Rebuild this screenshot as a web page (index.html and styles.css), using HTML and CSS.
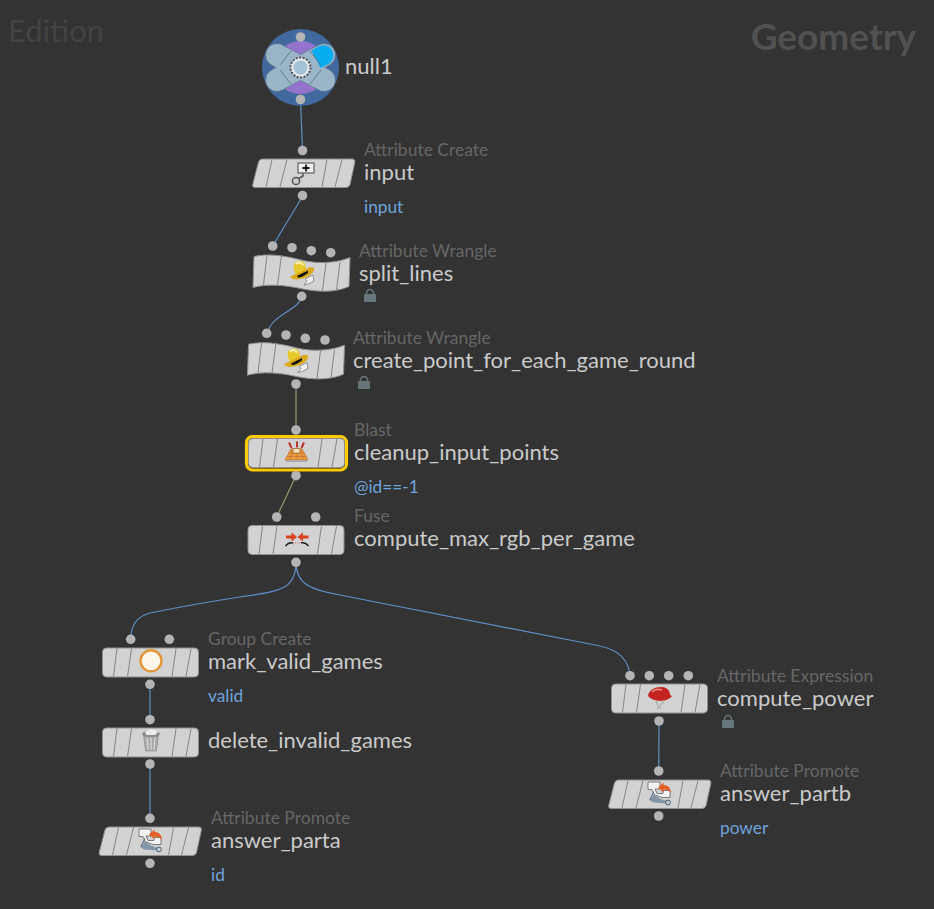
FILE: index.html
```html
<!DOCTYPE html>
<html lang="en">
<head>
  <meta charset="UTF-8">
  <title>Geometry network</title>
  <link rel="stylesheet" href="styles.css">
</head>
<body>

  <div class="graph">

    <div class="mark mark-edition">Edition</div>
    <div class="mark mark-context">Geometry</div>

    <svg class="canvas" width="934" height="909" viewBox="0 0 934 909">
      <defs>
        <!-- node bodies -->
        <g id="box">
          <rect class="body" x="0.5" y="0.5" width="96" height="29" rx="4"/>
          <path class="stripe" d="M15 1 L11.5 29 M29.5 1 L25.5 29 M74 1 L70 29 M89 1 L84 29"/>
        </g>
        <g id="para">
          <path class="body" d="M10.5 0.5 L100 0.5 Q103.5 0.5 102.8 4 L98 26 Q97 29 94 29 L3 29 Q0 29 0.7 26 L6.5 3.5 Q7.3 0.5 10.5 0.5 Z"/>
          <path class="stripe" d="M20 1 L14 28.5 M35 1 L28 28.5 M75 1 L70 28.5 M90 1 L83 28.5"/>
        </g>
        <g id="flag">
          <path class="body" d="M1 2.5 C14 -0.5 30 1 50 6.5 C66 10 84 9 97 3.5 L96 32.5 C84 38 68 38.5 50 35 C32 31 14 29.5 0 33.5 Z"/>
          <path class="stripe" d="M14 1.5 L10.5 31 M28.5 1 L24.5 31.5 M73 9 L69.5 36.5 M87 8 L83.5 36"/>
        </g>

        <!-- icons -->
        <g id="icon-wrangle">
          <path d="M4 3 C6 -1 14 -1 15 3 C16 6 16 9 15 11 L6 14 C4 10 3 6 4 3 Z" fill="#e6c92e"/>
          <path d="M6 3 C8 1 11 1 13 4" fill="none" stroke="#f7f3cf" stroke-width="2"/>
          <path d="M0 16 C4 13 9 12 12 10 C16 8 21 5 24 7 C25 11 20 15 14 17 C8 19 2 19 0 16 Z" fill="#d9a919"/>
          <path d="M7 15 C11 13 15 11 18 9.5 L18 12 C14 15 10 17 8 16.5 Z" fill="#111"/>
          <path d="M15 18 L23 14 L24 20 L18 23 L14 24 L17 20 Z" fill="#f2f2f2" stroke="#6e6e6e" stroke-width="0.7"/>
        </g>
        <g id="icon-promote">
          <path d="M1 0.5 H13 V7.5 H8 L10 12 H16 V9 H23 V16 H15 L7 13 L5 8 H1 Z" fill="#f3f3f3" stroke="#5f5f5f" stroke-width="0.8"/>
          <path d="M7 10 L3 18 L20 21" fill="none" stroke="#5a6e80" stroke-width="1.2"/>
          <path d="M3 19 L7 13 L13 17 L21 20 L20 22 L6 21 Z" fill="#8296a8"/>
          <circle cx="21" cy="21" r="2.4" fill="#c2ced7" stroke="#4c5c6a" stroke-width="1"/>
          <path d="M11 6 L16.5 1 V3.5 C21 3.5 24 6.5 24 11.5 C22.5 9 20 8 16.5 8 V11 Z" fill="#e35f27"/>
        </g>
        <g id="lock">
          <path class="shackle" d="M2.5 6 V4.5 A3.5 3.5 0 0 1 9.5 4.5 V6"/>
          <rect class="padlock" x="0" y="5.5" width="12" height="8" rx="1"/>
        </g>
      </defs>

      <!-- wires -->
      <path class="wire" d="M300.5 99.5 L302.5 150"/>
      <path class="wire" d="M303 195.5 L272.7 246"/>
      <path class="wire" d="M301.7 296.3 C300 310 270 315 268 333"/>
      <path class="wire olive" d="M296 384 L296 430"/>
      <path class="wire olive" d="M296 475.7 L276.7 517"/>
      <path class="wire" d="M296 562 C296 590 280 591 240 597 C200 603 165 610 150 613 C138 616 131 625 130.7 639"/>
      <path class="wire" d="M296 562 C296 585 312 590 340 595 L600 646 C618 650 629 660 630 676"/>
      <path class="wire" d="M150 684.3 L150 719.7"/>
      <path class="wire" d="M150 764 L150 818.3"/>
      <path class="wire" d="M659 721 L658.7 771"/>

      <!-- null1 -->
      <circle class="null-disc" cx="300.5" cy="67.5" r="38.5"/>
      <circle class="null-purple" cx="300.5" cy="67.5" r="26.5"/>
      <path class="null-edge" d="M277 55 L324 80 M324 55 L277 80"/>
      <path class="null-arm" d="M277 55 L324 80 M324 55 L277 80"/>
      <path class="null-sky" d="M311.3 50.5 L319.3 46.2 A10 10 0 0 1 328.7 63.8 L320.7 68.1 Z"/>
      <path class="null-seam" d="M280 65 L291 51 M310 51 L321 65 M280 70 L291 84 M310 84 L321 70"/>
      <circle class="null-gear" cx="300.5" cy="67.5" r="10"/>
      <circle class="null-hub" cx="300.5" cy="67.5" r="7"/>

      <!-- input -->
      <use href="#para" x="252" y="158.5"/>
      <rect x="298" y="163" width="16" height="10" fill="#eee" stroke="#444"/>
      <path d="M306 164.5 V171.5 M302.5 168 H309.5" stroke="#111" stroke-width="1.8"/>
      <path d="M303 173 L303 176 L296 180" fill="none" stroke="#555" stroke-width="1.5"/>
      <circle cx="296" cy="181" r="3.6" fill="#ccc" stroke="#555" stroke-width="1.5"/>

      <!-- split_lines -->
      <use href="#flag" x="253" y="254"/>
      <use href="#icon-wrangle" x="290" y="261"/>
      <use href="#lock" x="364" y="288.5"/>

      <!-- create_point_for_each_game_round -->
      <use href="#flag" x="247.5" y="341.7"/>
      <use href="#icon-wrangle" x="284" y="348.5"/>
      <use href="#lock" x="358" y="375.5"/>

      <!-- cleanup_input_points, selected -->
      <rect class="selected" x="246.5" y="436.5" width="100" height="33.5" rx="6"/>
      <use href="#box" x="248" y="438"/>
      <path d="M291 449 L302 449 L308 460 L285 460 Z" fill="#ea9a42" stroke="#b96a20" stroke-width="0.6"/>
      <path d="M288 453 H305 M286.5 456.5 H306.5 M292 450 L290 460 M297 450 V460 M301 450 L303 460" stroke="#c97a2c" stroke-width="0.8"/>
      <rect x="293" y="448.5" width="7" height="4.5" fill="#f0e0bc" stroke="#9a5c28" stroke-width="0.7"/>
      <path d="M291.5 448 L289 442.5 M297 447.5 V441.5 M301.5 448 L304 442.5" stroke="#b9342a" stroke-width="2"/>
      <rect x="286" y="460" width="21" height="2" fill="#aaa"/>

      <!-- compute_max_rgb_per_game -->
      <use href="#box" x="247.5" y="525"/>
      <path d="M286 535.5 H291.5 V532.5 L297 537 L291.5 541.5 V538.5 H286 Z M308.5 535.5 H303 V532.5 L297.5 537 L303 541.5 V538.5 H308.5 Z" fill="#d8401f"/>
      <path d="M285.5 546 C288 543 291 542.5 293 543 M308.5 546 C306 543 303 542.5 301 543" fill="none" stroke="#222" stroke-width="1.4"/>
      <path d="M293 543 H301" stroke="#d97a70" stroke-width="1" stroke-dasharray="1 1"/>

      <!-- mark_valid_games -->
      <use href="#box" x="102" y="647.5"/>
      <circle cx="151" cy="660.8" r="10.5" fill="#fdf6ea" stroke="#e2953a" stroke-width="2.4"/>

      <!-- delete_invalid_games -->
      <use href="#box" x="102" y="727.5"/>
      <path d="M143.5 735 H158.5 L156.5 751 H145.5 Z" fill="#a9a9a9" stroke="#8a8a8a" stroke-width="0.6"/>
      <path d="M147 737 L148 750 M151 737 V750 M155 737 L154 750" stroke="#e2e2e2" stroke-width="1"/>
      <ellipse cx="151" cy="734" rx="9" ry="3.5" fill="#8e8e8e"/>
      <path d="M145 733 C146 729 155 728 158 732 L155 735 H147 Z" fill="#ececec"/>

      <!-- answer_parta -->
      <use href="#para" x="98.5" y="826.5"/>
      <use href="#icon-promote" x="138" y="828.5"/>

      <!-- compute_power -->
      <use href="#box" x="611" y="683.5"/>
      <path d="M648 696 C649 688 660 685.5 666 688 C669 690 670 692 670 695 L672 696 C668 702 654 703 648 696 Z" fill="#c42420"/>
      <path d="M652 692 C655 689 659 689 662 690" fill="none" stroke="#ee8a84" stroke-width="1.6"/>
      <path d="M656 701 L658 706 V709 M664 701 L660 706 V709" fill="none" stroke="#b5b5b5" stroke-width="1.6"/>

      <!-- answer_partb -->
      <use href="#para" x="608" y="779.5"/>
      <use href="#icon-promote" x="647" y="781.5"/>
      <use href="#lock" x="722" y="714.5"/>

      <!-- ports -->
      <g class="ports">
        <circle cx="300.5" cy="37" r="4.8"/>
        <circle cx="300.5" cy="99.5" r="4.8"/>
        <circle cx="302.5" cy="150.5" r="4.8"/>
        <circle cx="302.5" cy="195.5" r="4.8"/>
        <circle cx="272.7" cy="246" r="4.8"/>
        <circle cx="292" cy="247.7" r="4.8"/>
        <circle cx="311.3" cy="250.7" r="4.8"/>
        <circle cx="330.7" cy="252.7" r="4.8"/>
        <circle cx="301.7" cy="296.3" r="4.8"/>
        <circle cx="266.7" cy="333.3" r="4.8"/>
        <circle cx="286" cy="335" r="4.8"/>
        <circle cx="305.3" cy="338.3" r="4.8"/>
        <circle cx="325" cy="340" r="4.8"/>
        <circle cx="296" cy="384" r="4.8"/>
        <circle cx="296" cy="430" r="4.8"/>
        <circle cx="296" cy="475.7" r="4.8"/>
        <circle cx="276.7" cy="517" r="4.8"/>
        <circle cx="315.7" cy="517" r="4.8"/>
        <circle cx="296" cy="562.3" r="4.8"/>
        <circle cx="130.7" cy="639.3" r="4.8"/>
        <circle cx="169.3" cy="639.3" r="4.8"/>
        <circle cx="150" cy="684.3" r="4.8"/>
        <circle cx="150" cy="719.7" r="4.8"/>
        <circle cx="150" cy="764" r="4.8"/>
        <circle cx="150" cy="818.3" r="4.8"/>
        <circle cx="150" cy="863.3" r="4.8"/>
        <circle cx="630" cy="675.7" r="4.8"/>
        <circle cx="649.3" cy="675.7" r="4.8"/>
        <circle cx="668.7" cy="675.7" r="4.8"/>
        <circle cx="688.3" cy="675.7" r="4.8"/>
        <circle cx="659" cy="721" r="4.8"/>
        <circle cx="658.7" cy="771" r="4.8"/>
        <circle cx="658.7" cy="816" r="4.8"/>
      </g>
    </svg>

    <!-- node labels -->
    <div class="label at-null"><div class="name">null1</div></div>

    <div class="label at-input">
      <div class="type">Attribute Create</div>
      <div class="name">input</div>
      <div class="tag">input</div>
    </div>

    <div class="label at-split">
      <div class="type">Attribute Wrangle</div>
      <div class="name">split_lines</div>
    </div>

    <div class="label at-create">
      <div class="type">Attribute Wrangle</div>
      <div class="name">create_point_for_each_game_round</div>
    </div>

    <div class="label at-cleanup">
      <div class="type">Blast</div>
      <div class="name">cleanup_input_points</div>
      <div class="tag">@id==-1</div>
    </div>

    <div class="label at-fuse">
      <div class="type">Fuse</div>
      <div class="name">compute_max_rgb_per_game</div>
    </div>

    <div class="label at-mark">
      <div class="type">Group Create</div>
      <div class="name">mark_valid_games</div>
      <div class="tag">valid</div>
    </div>

    <div class="label at-delete"><div class="name">delete_invalid_games</div></div>

    <div class="label at-parta">
      <div class="type">Attribute Promote</div>
      <div class="name">answer_parta</div>
      <div class="tag">id</div>
    </div>

    <div class="label at-power">
      <div class="type">Attribute Expression</div>
      <div class="name">compute_power</div>
    </div>

    <div class="label at-partb">
      <div class="type">Attribute Promote</div>
      <div class="name">answer_partb</div>
      <div class="tag">power</div>
    </div>

  </div>

</body>
</html>
```

FILE: styles.css
```css
html, body { margin: 0; background: #333333; }
body { font-family: Lato, "Noto Sans", sans-serif; }

.graph { position: relative; width: 934px; height: 909px; overflow: hidden; background: #333333; }
.canvas { position: absolute; left: 0; top: 0; }

/* context watermarks */
.mark { position: absolute; white-space: nowrap; }
.mark-edition { left: 8px; top: 10px; font-size: 31px; line-height: 40px; color: #434343; }
.mark-context { right: 18px; top: 12px; font-size: 37px; line-height: 48px; font-weight: 700; color: #515151; }

/* wires and ports */
.wire { fill: none; stroke: #5f8fc6; stroke-width: 1.2; }
.wire.olive { stroke: #8c9f6c; }
.ports circle { fill: #b4b4b4; }

/* node bodies */
.body { fill: #d2d2d2; stroke: #8f8f8f; stroke-width: 1; }
.stripe { fill: none; stroke: #858585; stroke-width: 1; }
.selected { fill: #111111; stroke: #fbcb00; stroke-width: 3.2; }
.shackle { fill: none; stroke: #66767a; stroke-width: 1.6; }
.padlock { fill: #66767a; }

/* null1 */
.null-disc { fill: #41699e; }
.null-purple { fill: #9373cc; }
.null-edge { fill: none; stroke: #5f7a8e; stroke-width: 23.5; stroke-linecap: round; }
.null-arm { fill: none; stroke: #9ab4c8; stroke-width: 22; stroke-linecap: round; }
.null-sky { fill: #06aeef; }
.null-seam { fill: none; stroke: #5f7a8e; stroke-width: 1; }
.null-gear { fill: #e4e9ec; stroke: #555555; stroke-width: 2; stroke-dasharray: 2 1.5; }
.null-hub { fill: #a4c2d6; }

/* labels */
.label { position: absolute; white-space: nowrap; }
.type { font-size: 17.5px; line-height: 21px; color: #666666; }
.name { font-size: 22px; line-height: 24px; color: #cacaca; }
.tag { font-size: 17.3px; line-height: 22px; margin-top: 12px; color: #6fa3dc; }

.at-null { left: 345px; top: 54px; }
.at-input { left: 364px; top: 139px; }
.at-split { left: 359px; top: 240px; }
.at-create { left: 353px; top: 327px; }
.at-cleanup { left: 354px; top: 419px; }
.at-fuse { left: 354px; top: 505px; }
.at-mark { left: 208px; top: 628px; }
.at-delete { left: 208px; top: 728px; }
.at-parta { left: 211px; top: 807px; }
.at-power { left: 717px; top: 665px; }
.at-partb { left: 720px; top: 760px; }
```
